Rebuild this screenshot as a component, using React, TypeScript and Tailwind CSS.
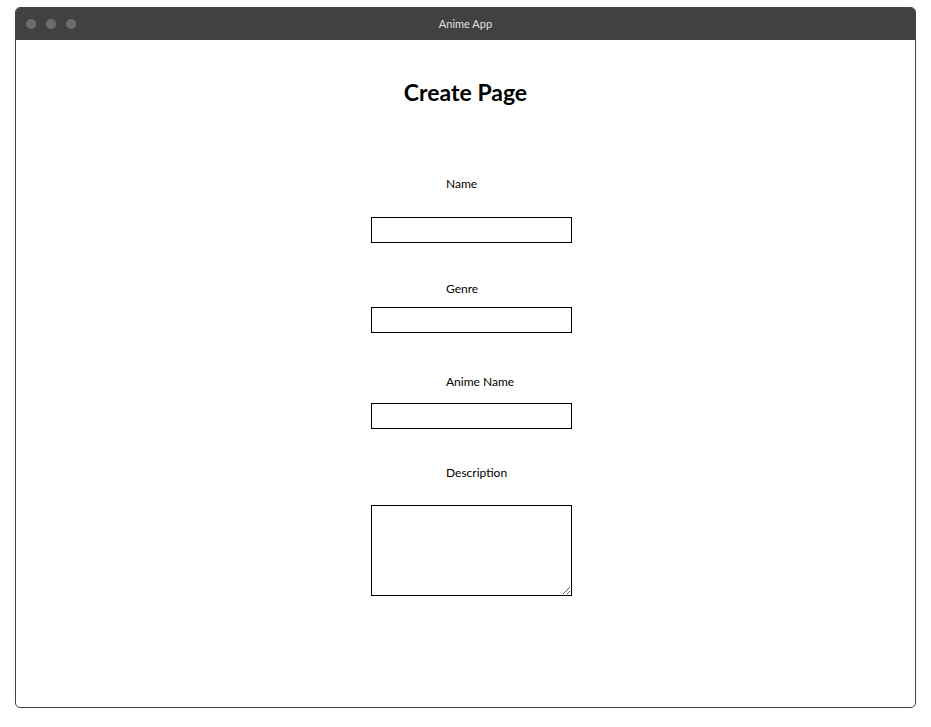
import React from "react";

const font = { fontFamily: "Lato, 'Noto Sans', sans-serif" };

export default function App() {
  return (
    <div className="w-[931px] h-[727px] bg-white pt-[7px] pl-[15px]" style={font}>
      <div className="w-[901px] h-[701px] border border-[#444] rounded-[5px] overflow-hidden flex flex-col">
        <div className="h-[32px] bg-[#414141] flex items-center relative shrink-0">
          <div className="flex gap-[10px] pl-[10px]">
            <span className="w-[10px] h-[10px] rounded-full bg-[#6c6c6c]" />
            <span className="w-[10px] h-[10px] rounded-full bg-[#6c6c6c]" />
            <span className="w-[10px] h-[10px] rounded-full bg-[#6c6c6c]" />
          </div>
          <div className="absolute inset-0 flex items-center justify-center text-[11px] text-[#e0e0e0]">
            Anime App
          </div>
        </div>
        <div className="flex flex-col items-center">
          <h1 className="mt-[37px] text-[23px] font-bold leading-[30px] text-black">Create Page</h1>
          <div className="w-[201px] ml-[12px] flex flex-col mt-[69px] text-[12px] text-black">
            <label className="pl-[75px] leading-[16px]">Name</label>
            <input className="mt-[25px] h-[26px] border border-black outline-none" />
            <label className="pl-[75px] leading-[16px] mt-[38px]">Genre</label>
            <input className="mt-[10px] h-[26px] border border-black outline-none" />
            <label className="pl-[75px] leading-[16px] mt-[41px]">Anime Name</label>
            <input className="mt-[13px] h-[26px] border border-black outline-none" />
            <label className="pl-[75px] leading-[16px] mt-[36px]">Description</label>
            <textarea className="mt-[24px] h-[91px] border border-black outline-none" />
          </div>
        </div>
      </div>
    </div>
  );
}
